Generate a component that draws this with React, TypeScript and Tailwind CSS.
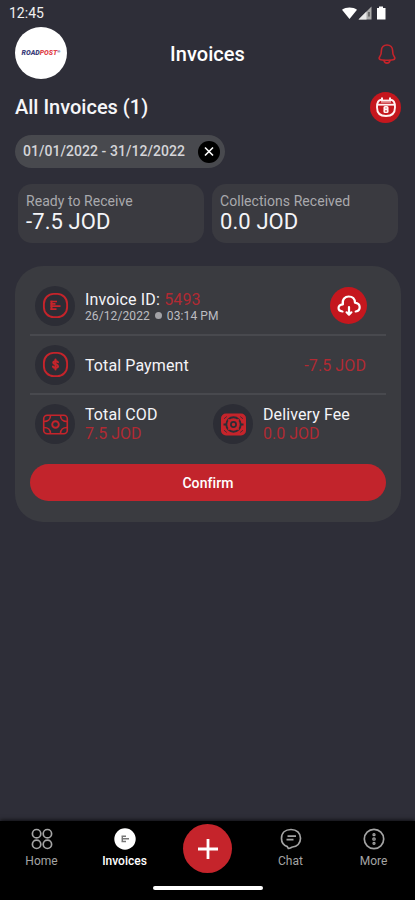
import type { ReactNode } from "react"

const RED = "#c5242b"

function BellIcon() {
  return (
    <svg width="20" height="22" viewBox="0 0 20 22" fill="none" stroke={RED} strokeWidth="1.6" strokeLinecap="round" strokeLinejoin="round">
      <path d="M10 2C6.600 2 4.400 4.300 4.400 7.600C4.400 10.700 4.200 11.800 3 13.200C1.600 15 1.900 16.300 3.800 16.700C7.500 17.400 12.500 17.400 16.200 16.700C18.100 16.300 18.400 15 17 13.200C15.800 11.800 15.600 10.700 15.600 7.600C15.600 4.300 13.400 2 10 2Z" />
      <path d="M7 17.400C7.500 21 12.500 21 13 17.400" />
    </svg>
  )
}

function CalendarIcon() {
  return (
    <svg width="22" height="22" viewBox="0 0 22 22" fill="none" stroke="#fff3f3" strokeWidth="1.9">
      <path d="M6.300 3.800C3.500 4 2 6.500 2 11.200C2 17 5 20 11 20S20 17 20 11.200C20 6.500 18.500 4 15.700 3.800" />
      <path d="M2.500 8.700h17" strokeWidth="1.800" />
      <path d="M6 4.600h10" strokeWidth="2" />
      <path d="M6 6.600h10" strokeWidth="1" opacity="0.5" />
      <path d="M7 1.500v3M15 1.500v3" strokeWidth="2" />
      <rect x="9.200" y="10.900" width="3.600" height="2.500" rx="0.800" strokeWidth="1.600" />
      <rect x="9.200" y="13.400" width="3.600" height="2.900" rx="0.800" strokeWidth="1.600" />
    </svg>
  )
}

function InvoiceIcon() {
  return (
    <svg width="27" height="27" viewBox="0 0 27 27" fill="none" stroke={RED} strokeWidth="1.900">
      <rect x="1.900" y="1.900" width="23.200" height="23.200" rx="9.800" />
      <path d="M8.500 9.500h6.500M8.500 11.900h5M8.500 14.200h10M8.500 17.200h6" strokeWidth="1.700" />
      <path d="M9.500 8.700v9.300" strokeWidth="2" />
    </svg>
  )
}

function DollarIcon() {
  return (
    <svg width="27" height="27" viewBox="0 0 27 27" fill="none" stroke={RED} strokeWidth="1.900" strokeLinecap="round">
      <rect x="1.900" y="1.900" width="23.200" height="23.200" rx="9.800" />
      <path d="M16 11.300C15.600 9.900 11.300 9.700 11.300 11.700C11.300 13.800 16 12.900 16 15.200C16 17.200 11.500 17.100 11 15.600" strokeWidth="2.100" />
      <path d="M13.500 8.500v10" strokeWidth="2" />
    </svg>
  )
}

function CashIcon() {
  return (
    <svg width="27" height="21" viewBox="0 0 27 21" fill="none" stroke={RED} strokeWidth="1.600">
      <rect x="1.700" y="1.200" width="23.600" height="18.600" rx="3.500" />
      <path d="M8.500 1.500C8.500 5 6 7.500 2 7.500M18.500 1.500C18.500 5 21 7.500 25 7.500M8.500 19.500C8.500 16 6 13.500 2 13.500M18.500 19.500C18.500 16 21 13.500 25 13.500" />
      <circle cx="13.500" cy="10.500" r="3.300" strokeWidth="1.900" />
    </svg>
  )
}

function FeeIcon() {
  return (
    <svg width="27" height="23" viewBox="0 0 27 23" fill="none">
      <rect x="1" y="0.500" width="25" height="22" rx="5" fill={RED} />
      <g stroke="#2c2d35">
        <circle cx="13.500" cy="11.500" r="7.200" strokeWidth="1.900" />
        <path d="M3.500 11.500h3.500M20 11.500h3.500" strokeWidth="2" />
        <circle cx="13.500" cy="11.500" r="2.600" strokeWidth="1.700" />
        <path d="M4 5.800L6.800 3.500M23 5.800L20.200 3.500M4 17.200L6.800 19.500M23 17.200L20.200 19.500" strokeWidth="0.800" />
      </g>
      <path d="M8.300 6.300l1.600 1.600M18.700 6.300l-1.600 1.600M8.300 16.700l1.600-1.600M18.700 16.700l-1.600-1.600" stroke={RED} strokeWidth="1.800" />
    </svg>
  )
}

function CloudIcon() {
  return (
    <svg width="26" height="24" viewBox="0 0 26 24" fill="none" stroke="#fff" strokeWidth="2.200" strokeLinecap="round" strokeLinejoin="round">
      <path d="M6.500 17.500C1.300 16.800 1 11.200 6.900 10.400C5.800 5.300 9.200 2.500 12.700 2.500C16.300 2.500 18.800 4.900 19 8.600C25 9.500 25.200 16.500 19.700 17.500" />
      <path d="M13 13v7.300M10.600 18.300L13 20.600L15.400 18.300" />
    </svg>
  )
}

function HomeIcon() {
  return (
    <svg width="22" height="22" viewBox="0 0 22 22" fill="none" stroke="#a4a4a4" strokeWidth="1.700">
      <circle cx="5.600" cy="5.700" r="4.200" />
      <circle cx="16.400" cy="5.700" r="4.200" />
      <circle cx="5.600" cy="16.300" r="4.200" />
      <circle cx="16.400" cy="16.300" r="4.200" />
    </svg>
  )
}

function InvoicesTabIcon() {
  return (
    <svg width="22" height="22" viewBox="0 0 22 22">
      <circle cx="11" cy="11" r="10.700" fill="#fff" />
      <path d="M7.500 8.200h4.500M7.500 10.800h7.500M7.500 13.500h4.500M8.300 7.500v6.500" stroke="#777" strokeWidth="1.400" fill="none" />
    </svg>
  )
}

function ChatIcon() {
  return (
    <svg width="22" height="22" viewBox="0 0 22 22" fill="none" stroke="#a4a4a4" strokeWidth="1.700">
      <path d="M8.300 20.400L7.300 18.600C3.600 17.300 1.500 14.500 1.500 10.500C1.500 5 5.300 1.500 11 1.500S20.500 5 20.500 10.300C20.500 15.500 17 18.800 12.500 19C11 19.300 9.800 20.800 8.300 20.400Z" />
      <path d="M7.500 8.200h8.500M6.500 11.600h7" strokeWidth="1.700" />
    </svg>
  )
}

function MoreIcon() {
  return (
    <svg width="22" height="22" viewBox="0 0 22 22" fill="none" stroke="#a4a4a4" strokeWidth="1.700">
      <circle cx="11" cy="11" r="9.700" />
      <g strokeWidth="1.300">
        <circle cx="11" cy="6.700" r="1" />
        <circle cx="11" cy="11" r="1.200" />
        <circle cx="11" cy="15.300" r="1" />
      </g>
    </svg>
  )
}

function StatusBar() {
  return (
    <div className="flex h-[27px] items-center justify-between pr-[27px] pl-[9px]">
      <span className="text-[14px] leading-[27px] text-[#f0f0f0]">12:45</span>
      <svg width="47" height="16" viewBox="0 0 47 16">
        <path d="M1 3.800C5 0.600 12 0.600 16 3.800L8.500 13Z" fill="#fff" />
        <path d="M17.500 13.500L30.500 0.500V13.500Z" fill="#aaa" />
        <path d="M17.500 13.500L25.500 5.500V13.500Z" fill="#e8e8e8" />
        <path d="M28 6v4.500" stroke="#444" strokeWidth="1.200" />
        <path d="M38 2V0.500h4V2h2.500v11.600h-8.500V2Z" fill="#fff" />
      </svg>
    </div>
  )
}

function SummaryCard({ label, value }: { label: string; value: string }) {
  return (
    <div className="h-[59px] flex-1 rounded-[14px] bg-[#3a3a40] px-2 pt-[9px]">
      <p className="text-[14px] leading-[17px] tracking-[0.05px] text-[#a9a9ad]">{label}</p>
      <p className="text-[22px] leading-[24px] tracking-[0.1px] text-[#f4f4f8]">{value}</p>
    </div>
  )
}

function IconCircle({ children }: { children: ReactNode }) {
  return <div className="flex size-[40px] shrink-0 items-center justify-center rounded-full bg-[#2c2d35]">{children}</div>
}

function NavItem({ icon, label, active }: { icon: ReactNode; label: string; active?: boolean }) {
  return (
    <div className="flex w-[83px] flex-col items-center pt-[7px]">
      {icon}
      <span className={`mt-[4px] text-[12px] leading-[15px] ${active ? "font-medium text-white" : "text-[#a4a4a4]"}`}>{label}</span>
    </div>
  )
}

export default function App() {
  return (
    <div className="flex h-[900px] w-[415px] flex-col overflow-hidden bg-[#2e2e38] font-['Roboto',sans-serif]">
      <StatusBar />

      <header className="grid h-[52px] grid-cols-3 items-center pr-[18px] pl-[15px]">
        <div className="flex size-[52px] items-center justify-center rounded-full bg-white text-[7px] font-black italic">
          <span className="text-[#3b3f7c]">ROAD</span>
          <span className="text-[#e0454c]">POST</span>
          <span className="mb-[3px] text-[4px] text-[#3b3f7c]">®</span>
        </div>
        <h1 className="pt-[2px] pl-[3px] text-center text-[20px] font-medium tracking-[0.05px] text-white">Invoices</h1>
        <div className="flex justify-end pt-[2px]">
          <BellIcon />
        </div>
      </header>

      <div className="mt-[12px] flex h-[32px] items-center justify-between pr-[14px] pl-[15px]">
        <h2 className="text-[20px] font-medium text-[#f6f6f8]">All Invoices (1)</h2>
        <div className="flex size-[31px] items-center justify-center rounded-full bg-[#c5171e]">
          <CalendarIcon />
        </div>
      </div>

      <div className="mt-[12px] ml-[15px] flex h-[33px] w-[210px] items-center justify-between rounded-full bg-[#48494e] pr-[5px] pl-[8px]">
        <span className="text-[14px] font-medium tracking-[0.05px] whitespace-nowrap text-[#d5d5d9]">01/01/2022 - 31/12/2022</span>
        <svg width="22" height="22" viewBox="0 0 22 22">
          <circle cx="11" cy="11" r="11" fill="#000" />
          <path d="M7 6.500l8 8M15 6.500l-8 8" stroke="#fff" strokeWidth="1.600" />
        </svg>
      </div>

      <div className="mt-[16px] flex gap-[8px] pr-[17px] pl-[18px]">
        <SummaryCard label="Ready to Receive" value="-7.5 JOD" />
        <SummaryCard label="Collections Received" value="0.0 JOD" />
      </div>

      <section className="mt-[23px] ml-[15px] flex h-[256px] w-[386px] flex-col rounded-[28px] bg-[#3a3b40] px-[15px] pt-[11px]">
        <div className="flex h-[59px] items-center border-b-2 border-[#48494e] pl-[5px]">
          <IconCircle><InvoiceIcon /></IconCircle>
          <div className="ml-[10px] flex-1 pt-[2px]">
            <p className="text-[16px] leading-[18px] tracking-[0.15px] text-[#f4f4f8]">Invoice ID: <span className="text-[#b12a33]">5493</span></p>
            <div className="flex items-center text-[12px] leading-[14px] tracking-[0.1px] text-[#bdbdc1]">
              <span>26/12/2022</span>
              <span className="mx-[5px] size-[7px] rounded-full bg-[#a2a2a6]" />
              <span>03:14 PM</span>
            </div>
          </div>
          <div className="mr-[19px] flex size-[37px] items-center justify-center rounded-full bg-[#c5171e]">
            <CloudIcon />
          </div>
        </div>

        <div className="flex h-[59px] items-center border-b-2 border-[#48494e] pl-[5px]">
          <IconCircle><DollarIcon /></IconCircle>
          <p className="ml-[10px] flex-1 pt-[2px] text-[16px] tracking-[0.1px] text-[#f4f4f8]">Total Payment</p>
          <p className="mr-[20px] pt-[2px] text-[16px] tracking-[0.1px] text-[#b12a33]">-7.5 JOD</p>
        </div>

        <div className="flex h-[58px] items-center pl-[5px]">
          <IconCircle><CashIcon /></IconCircle>
          <div className="ml-[10px] w-[128px]">
            <p className="text-[16px] leading-[19px] tracking-[0.1px] text-[#f4f4f8]">Total COD</p>
            <p className="text-[16px] leading-[19px] text-[#b12a33]">7.5 JOD</p>
          </div>
          <IconCircle><FeeIcon /></IconCircle>
          <div className="ml-[10px]">
            <p className="text-[16px] leading-[19px] tracking-[0.1px] text-[#f4f4f8]">Delivery Fee</p>
            <p className="text-[16px] leading-[19px] text-[#b12a33]">0.0 JOD</p>
          </div>
        </div>

        <button type="button" className="mt-[11px] h-[37px] rounded-full bg-[#c2242c] pt-[2px] text-[14px] font-medium tracking-[0.1px] text-white">
          Confirm
        </button>
      </section>

      <nav className="mt-auto flex h-[79px] flex-col items-center bg-black shadow-[0_-1px_4px_rgba(0,0,0,0.7)]">
        <div className="flex h-[65px] w-full">
          <NavItem icon={<HomeIcon />} label="Home" />
          <NavItem icon={<InvoicesTabIcon />} label="Invoices" active />
          <div className="flex w-[83px] justify-center pt-[3px]">
            <div className="flex size-[49px] items-center justify-center rounded-full bg-[#c5242b]">
              <svg width="20" height="20" viewBox="0 0 20 20" stroke="#fff" strokeWidth="2.800">
                <path d="M10 0v20M0 10h20" />
              </svg>
            </div>
          </div>
          <NavItem icon={<ChatIcon />} label="Chat" />
          <NavItem icon={<MoreIcon />} label="More" />
        </div>
        <div className="h-[4px] w-[110px] rounded-full bg-white" />
      </nav>
    </div>
  )
}
